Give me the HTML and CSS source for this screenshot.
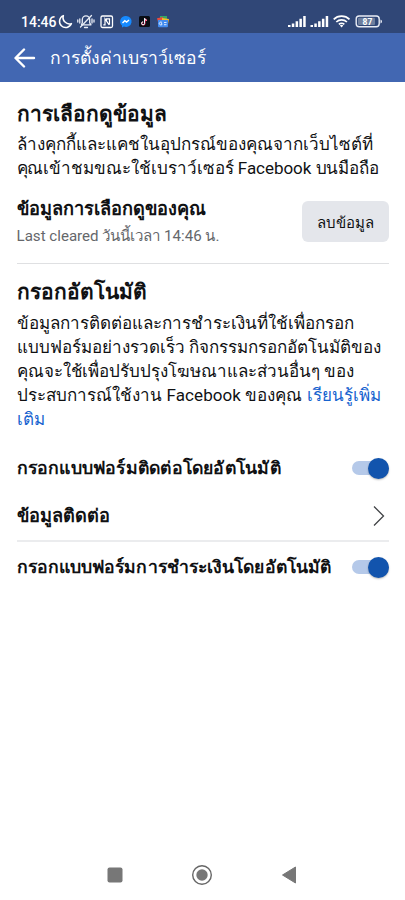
FILE: index.html
```html
<!DOCTYPE html>
<html lang="th">
<head>
<meta charset="utf-8">
<title>การตั้งค่าเบราว์เซอร์</title>
<link rel="stylesheet" href="styles.css">
</head>
<body>
<div class="status">
  <span class="clock">14:46</span>
  <svg class="sysicons" width="112" height="18" viewBox="58 12 112 18" fill="none">
    <path d="M63.4 15.6A6.2 6.2 0 1 0 71.5 23.6A6.4 6.4 0 0 1 63.4 15.6Z" stroke="#fff" stroke-width="1.5" stroke-linejoin="round"/>
    <g stroke="#e9edf6" stroke-width="1.3" stroke-linecap="round" stroke-linejoin="round">
      <path d="M81.5 24.8h9.5l-1.3-2v-3.300a3.700 3.700 0 0 0-7.400 0v3.300z"/><path d="M84.500 27.500h3M91.500 15.500l-11 11.500M79.800 19v4M77.800 20v2M92 19v4M94 20v2"/>
    </g>
    <rect x="101" y="16" width="11.500" height="11.500" rx="1.500" stroke="#fff" stroke-width="1.300"/>
    <path d="M103.300 24.800h1.700v-6l4.200 6M106.500 22v-3.200h3v6" stroke="#fff" stroke-width="1.200"/>
    <path d="M125.700 16a5.600 5.500 0 0 0-3.700 9.600v2l1.900-1a5.600 5.500 0 1 0 1.800-10.600z" fill="#168aff"/>
    <path d="M122.500 23l2.300-2.300 1.800 1.300 2.400-2" stroke="#fff" stroke-width="1.400"/>
    <rect x="139" y="16" width="11" height="11" rx="1.500" fill="#090d14"/>
    <path d="M144.900 18.500v5a1.500 1.500 0 1 1-1.500-1.500M144.900 18.500q.4 1.700 2.200 1.900" stroke="#ff2f61" stroke-width="1.200"/>
    <path d="M144.500 18.300v5a1.500 1.500 0 1 1-1.500-1.500M144.500 18.300q.4 1.700 2.200 1.900" stroke="#dffcff" stroke-width="1"/>
    <path d="M160 16h7v6h-7z" fill="#36a765"/><path d="M157 18.300l6-1.300 1 5h-6z" fill="#ea4b3e"/><path d="M162 18l7 1-1 5h-6z" fill="#f6be27"/>
    <path d="M158 20h10v6.200a1 1 0 0 1-1 1h-8a1 1 0 0 1-1-1z" fill="#438cf0"/>
    <path d="M162 22.500a1.500 1.500 0 1 0 0 2v-.8h-1M164 22.500h2.500M164 24.700h2.500" stroke="#fff" stroke-width=".8"/>
  </svg>
  <svg class="signals" width="98" height="18" viewBox="286 12 98 18" fill="none">
    <g fill="#fff"><path d="M288 25h2.500v2H288zM291.800 23.500h2.500V27h-2.500zM295.600 21.200h2.500V27h-2.500zM299.400 18.700h2.500V27h-2.500zM303.200 16h2.500v11h-2.500z"/><path d="M310.500 25h2.500v2h-2.500zM314.300 23.500h2.500V27h-2.500zM318.100 21.200h2.500V27h-2.500zM321.900 18.700h2.500V27h-2.500zM325.700 16h2.500v11h-2.500z"/></g>
    <path d="M333.700 19.400a11.300 11.300 0 0 1 15.800 0M336.300 22a7.500 7.500 0 0 1 10.600 0M338.900 24.400a3.800 3.800 0 0 1 5.400 0" stroke="#fff" stroke-width="1.700"/>
    <path d="M339.900 25.500q1.700-1.300 3.400 0l-1.700 2z" fill="#fff"/>
    <rect x="356.200" y="16" width="23" height="10.800" rx="3" stroke="#e9edf6" stroke-width="1.400"/>
    <rect x="358" y="17.800" width="17" height="7.300" rx="1" fill="#6e7f9e"/>
    <path d="M380.500 19.500q1.500.3 1.500 2t-1.500 2z" fill="#e9edf6"/>
    <text class="battery" x="367.500" y="24.700" text-anchor="middle">87</text>
  </svg>
</div>
<header class="bar">
  <svg width="22" height="20" viewBox="0 0 22 20" fill="none" stroke="#fff" stroke-width="2.400" stroke-linecap="round" stroke-linejoin="round"><path d="M20 10H2M10 1.500L1.500 10l8.500 8.500"/></svg>
  <h1>การตั้งค่าเบราว์เซอร์</h1>
</header>
<main>
  <section class="data">
    <h2>การเลือกดูข้อมูล</h2>
    <p class="copy"><span>ล้างคุกกี้และแคชในอุปกรณ์ของคุณจากเว็บไซต์ที่</span><span class="l2">คุณเข้าชมขณะใช้เบราว์เซอร์ Facebook บนมือถือ</span></p>
    <div class="clear">
      <div><h3 class="h-yours">ข้อมูลการเลือกดูของคุณ</h3><p class="last">Last cleared วันนี้เวลา 14:46 น.</p></div>
      <button>ลบข้อมูล</button>
    </div>
  </section>
  <section class="auto">
    <h2>กรอกอัตโนมัติ</h2>
    <p class="copy"><span>ข้อมูลการติดต่อและการชำระเงินที่ใช้เพื่อกรอก</span><span>แบบฟอร์มอย่างรวดเร็ว กิจกรรมกรอกอัตโนมัติของ</span><span class="l5">คุณจะใช้เพื่อปรับปรุงโฆษณาและส่วนอื่นๆ ของ</span><span class="l6">ประสบการณ์ใช้งาน Facebook ของคุณ <a>เรียนรู้เพิ่ม</a></span><span><a>เติม</a></span></p>
    <div class="row r1"><h3 class="t1">กรอกแบบฟอร์มติดต่อโดยอัตโนมัติ</h3><i class="toggle"></i></div>
    <div class="row r2"><h3 class="t2">ข้อมูลติดต่อ</h3><svg class="chev" width="12" height="22" viewBox="0 0 12 22" fill="none" stroke="#414346" stroke-width="1.300"><path d="M1 1.500L10.500 11 1 20.500"/></svg></div>
    <div class="row r3"><h3 class="t3">กรอกแบบฟอร์มการชำระเงินโดยอัตโนมัติ</h3><i class="toggle"></i></div>
  </section>
</main>
<nav>
  <svg width="16" height="16"><rect x=".5" y=".5" width="15" height="15" rx="2" fill="#777"/></svg>
  <svg width="22" height="22" fill="none"><circle cx="11" cy="11" r="9.300" stroke="#666" stroke-width="1.400"/><circle cx="11" cy="11" r="5.700" fill="#777"/></svg>
  <svg width="16" height="18"><path d="M1.500 9L14.500 1v16z" fill="#777" stroke="#777" stroke-linejoin="round"/></svg>
</nav>
</body>
</html>
```
FILE: styles.css
```css
*{box-sizing:border-box}
body{margin:0;width:405px;height:900px;display:flex;flex-direction:column;background:#fff;color:#101113;font-family:Roboto,"Noto Sans",sans-serif;overflow:hidden}
h1,h2,h3,p{margin:0;white-space:nowrap}
.status{height:33px;background:#304777;color:#fff;display:flex;align-items:center;padding:9px 21px 0 21px}
.clock{width:37px;font-size:14px;font-weight:500;line-height:18px;padding-top:1px}
.signals{margin-left:auto}
.battery{font:700 8.500px Roboto,sans-serif;fill:#fff}
.bar{height:49px;background:#4267b2;color:#fff;display:flex;align-items:center;padding-left:14px;gap:14px}
.bar h1{font-size:17.5px;font-weight:400;line-height:30px}
main{flex:1;padding:0 16.500px 0 16.500px}
.data{height:182px;padding-top:19px;border-bottom:1px solid #dfe0e2}
h2{font-size:20.900px;line-height:26px;font-weight:700}
h3{font-size:17.650px;line-height:24px;font-weight:700}
.h-yours{font-size:18.200px}
.t1{letter-spacing:.22px}
.t2{font-size:18.200px}
.t3{font-size:17.600px;letter-spacing:.09px}
.copy{font-size:17px;line-height:24px;padding-top:5px}
.copy span{display:block}
.copy .l2{letter-spacing:-.04px}
.copy .l5{font-size:16.950px}
.copy .l6{letter-spacing:.06px}
a{color:#1763cf}
.clear{display:flex;justify-content:space-between;padding-top:17px}
.last{font-size:15.100px;line-height:24px;color:#65676b;padding-top:3px}
button{width:87px;height:41px;margin-top:4px;padding:3px 0 0;border:0;border-radius:6px;background:#e4e6eb;color:#101113;font:400 15px/38px Roboto,"Noto Sans",sans-serif}
.auto{padding-top:15px}
.auto .copy{padding-top:6px}
.row{display:flex;justify-content:space-between;align-items:center}
.r1{height:49px;margin-top:12px}
.r2{height:50px;border-bottom:2px solid #ebecee}
.r3{height:50px}
.chev{margin-right:4px}
.toggle{display:block;width:37px;height:14px;border-radius:7px;background:#b5c9e9;position:relative}
.toggle::after{content:"";position:absolute;right:0;top:-3px;width:21px;height:21px;border-radius:50%;background:#1254ad;box-shadow:0 1px 2px #0004}
nav{height:50px;display:flex;align-items:center;justify-content:space-between;padding:0 108px 0 107px}
```
